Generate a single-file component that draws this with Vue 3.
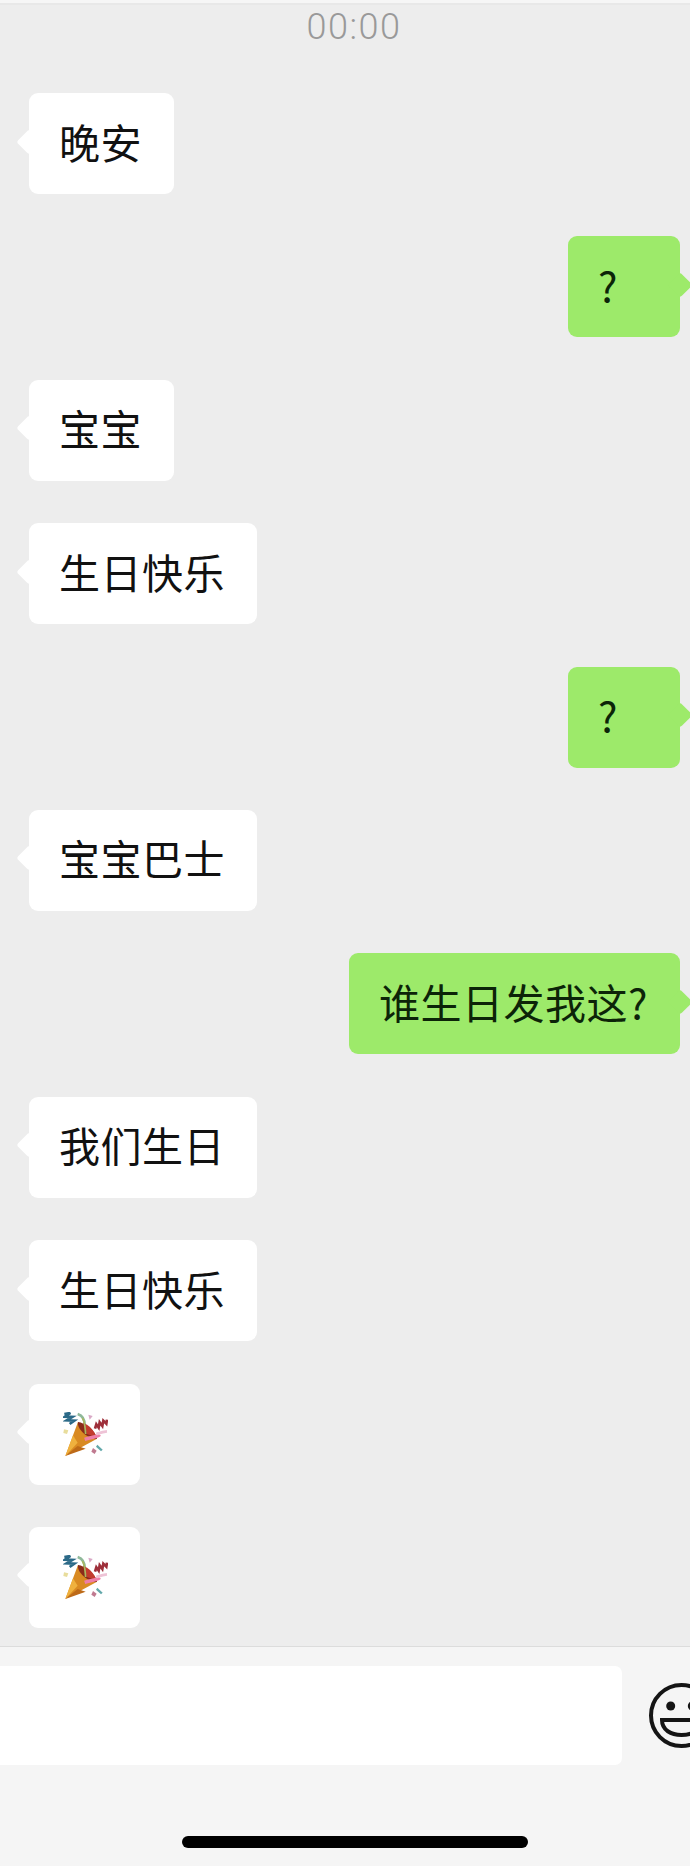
<template>
  <div class="page">
    <div class="top-strip"></div>
    <div class="time">00:00</div>

    <div class="messages">
      <div v-for="msg in messages" :key="msg.id" class="row" :class="msg.mine ? 'mine' : 'theirs'">
        <div class="bubble" :class="{ 'emoji-bubble': msg.emoji }">
          <svg v-if="msg.emoji" class="party" viewBox="0 0 135 135">
            <!-- streamers behind the cone -->
            <path d="M4 6l18-3-16 11 22 1-17 10 23 1-14 10" fill="none" stroke="#2c6a88" stroke-width="8" />
            <path d="M44 6c14 4 22 16 22 38" fill="none" stroke="#8fb99a" stroke-width="8" />
            <!-- cone -->
            <path d="M7 132L45 30l57 50z" fill="#d98a22" />
            <path d="M7 132L30 70l14 22z" fill="#efb13e" />
            <path d="M7 132l37-30 24 8z" fill="#bd6a18" />
            <path d="M45 30c20 2 54 28 57 50-18 6-62-26-57-50z" fill="#8a2c1a" />
            <path d="M60 32c16 6 34 22 40 44l-28-10z" fill="#c23b2e" />
            <path d="M58 18c8 10 8 30 10 48" fill="none" stroke="#a8b860" stroke-width="5" />
            <!-- pink streamer -->
            <path d="M65 82c24-8 38-6 45-14" fill="none" stroke="#ee7ea6" stroke-width="10" />
            <path d="M100 66c12-4 20-7 32-8" fill="none" stroke="#eec3d6" stroke-width="8" />
            <!-- red squiggle -->
            <path d="M96 50l4-13 7 10 3-16 8 11 3-16 9 9 2-12" fill="none" stroke="#9e2f3a" stroke-width="8" />
            <!-- confetti -->
            <path d="M76 8l13 4-9 11z" fill="#d9a9c6" />
            <path d="M3 52l13 3-4 11-11-3z" fill="#e8dd9c" />
            <path d="M103 98l16 15-5 5-15-14z" fill="#62a8aa" />
            <path d="M90 108l11 8-6 10-10-7z" fill="#c07a90" />
          </svg>
          <template v-else>{{ msg.text }}</template>
        </div>
      </div>
    </div>

    <div class="footer">
      <div class="input-row">
        <div class="input"></div>
        <svg class="smiley" viewBox="0 0 65 65">
          <circle cx="32.5" cy="32.5" r="30.5" fill="none" stroke="#151515" stroke-width="4" />
          <circle cx="21.7" cy="23" r="4.5" fill="#151515" />
          <circle cx="43.3" cy="23" r="4.5" fill="#151515" />
          <path d="M13 37H52C52 47 43 52 32.5 52S13 47 13 37Z" fill="none" stroke="#151515" stroke-width="4" />
        </svg>
      </div>
      <div class="home-bar"></div>
    </div>
  </div>
</template>

<script setup>
const messages = [
  { id: 1, text: '晚安' },
  { id: 2, text: '?', mine: true },
  { id: 3, text: '宝宝' },
  { id: 4, text: '生日快乐' },
  { id: 5, text: '?', mine: true },
  { id: 6, text: '宝宝巴士' },
  { id: 7, text: '谁生日发我这?', mine: true },
  { id: 8, text: '我们生日' },
  { id: 9, text: '生日快乐' },
  { id: 10, emoji: true },
  { id: 11, emoji: true }
]
</script>

<style>
html, body { margin: 0; background: #ededed; }
</style>

<style scoped>
.page {
  width: 690px;
  height: 1866px;
  display: flex;
  flex-direction: column;
  overflow: hidden;
  background: #ededed;
  font-family: "Noto Sans CJK SC", "Liberation Sans", sans-serif;
}
.top-strip {
  height: 3px;
  background: #f6f6f6;
  border-bottom: 2px solid #e8e8e8;
  flex: none;
}
.time {
  height: 88px;
  padding-left: 18px;
  padding-top: 4px;
  box-sizing: border-box;
  flex: none;
  text-align: center;
  font-family: Roboto, "Liberation Sans", sans-serif;
  font-weight: 300;
  font-size: 36px;
  line-height: 36px;
  letter-spacing: 1.5px;
  color: #999;
}
.messages {
  flex: 1;
  display: flex;
  flex-direction: column;
  gap: 42.4px;
  padding: 0 10px 0 29px;
}
.row { display: flex; }
.row.mine { justify-content: flex-end; }
.bubble {
  position: relative;
  height: 101px;
  min-width: 112px;
  box-sizing: border-box;
  padding: 0 32px 6px 30px;
  display: flex;
  align-items: center;
  border-radius: 9px;
  background: #fff;
  color: #111;
  font-size: 41px;
  letter-spacing: 0.5px;
  white-space: nowrap;
}
.mine .bubble {
  background: #9dea6a;
  color: #0c2408;
}
.bubble::before {
  content: "";
  position: absolute;
  top: calc(50% - 11px);
  width: 18px;
  height: 18px;
  border-radius: 3px;
  background: inherit;
  transform: rotate(45deg);
}
.theirs .bubble::before { left: -9px; }
.mine .bubble::before { right: -9px; }
.emoji-bubble { padding: 0 32px 0 34px; min-width: 0; }
.party { width: 45px; height: 45px; flex: none; filter: blur(0.4px); }
.footer {
  height: 220px;
  flex: none;
  box-sizing: border-box;
  padding-top: 19px;
  border-top: 1px solid #dcdcdc;
  background: #f5f5f5;
}
.input-row {
  display: flex;
  align-items: center;
  gap: 27px;
}
.input {
  width: 622px;
  height: 99px;
  flex: none;
  border-radius: 0 7px 7px 0;
  background: #fff;
}
.smiley { width: 65px; height: 65px; flex: none; }
.home-bar {
  width: 346px;
  height: 12px;
  margin: 71px 0 0 182px;
  border-radius: 6px;
  background: #000;
}
</style>
